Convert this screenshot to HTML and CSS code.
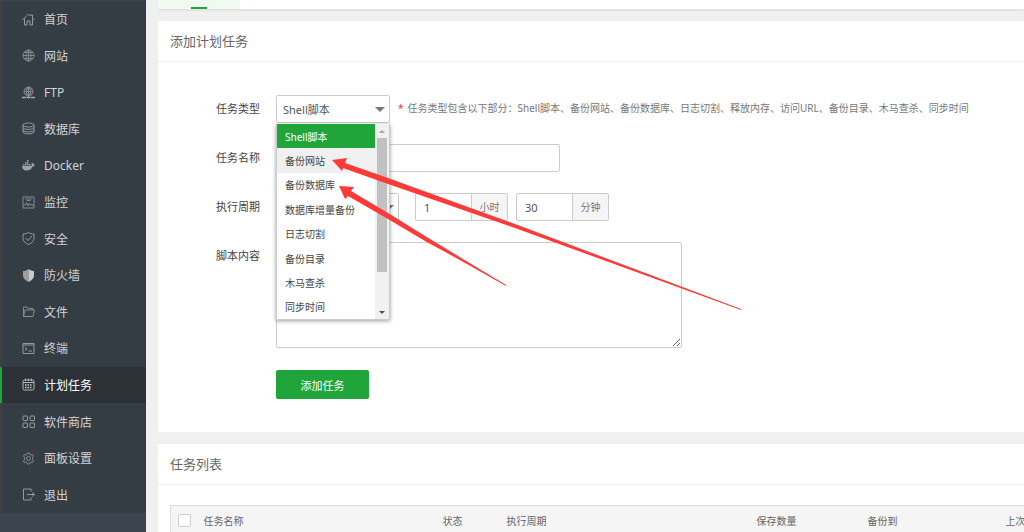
FILE: index.html
```html
<!DOCTYPE html>
<html lang="zh-CN">
<head>
    <meta charset="UTF-8">
    <meta name="viewport" content="width=device-width, initial-scale=1.0">
    <title>计划任务</title>
    <link rel="stylesheet" href="styles.css">
</head>
<body>
    <aside class="sidebar">
        <nav>
            <ul class="menu">
                <li><a href="#"><svg class="icon" viewBox="0 0 26 26"><path class="mid" d="M1 14L13 2l4 4V4h4v6l4 4M5 11v13h5v-8h6v8h5V11"/></svg>首页</a></li>
                <li><a href="#"><svg class="icon" viewBox="0 0 26 26"><circle cx="13" cy="13" r="11"/><ellipse cx="13" cy="13" rx="5" ry="11"/><path d="M13 2v22M2 13h22M4 7h18M4 19h18"/></svg>网站</a></li>
                <li><a href="#"><svg class="icon" viewBox="0 0 26 26"><circle cx="13" cy="11" r="9"/><ellipse cx="13" cy="11" rx="4" ry="9"/><path d="M13 2v22M4 11h18M6 6h14M6 16h14"/><path class="thick" d="M0 23h9M10 23h6M17 23h9"/></svg>FTP</a></li>
                <li><a href="#"><svg class="icon" viewBox="0 0 26 26"><g class="mid"><ellipse cx="13" cy="6" rx="11" ry="4"/><path d="M2 6v14c0 5 22 5 22 0V6M2 11c0 5 22 5 22 0M2 16c0 5 22 5 22 0"/></g></svg>数据库</a></li>
                <li><a href="#"><svg class="icon solid" viewBox="0 0 26 26"><path d="M0 14h18c2 0 2-3 1-5l1-2c2 1 3 2 3 4 1 0 2 0 3 1-1 2-3 3-5 3-2 5-6 8-12 8-6 0-9-4-9-9zM2 10h3v3H2zM6 10h3v3H6zM10 10h3v3h-3zM14 10h3v3h-3zM6 6h3v3H6zM10 6h3v3h-3zM10 2h3v3h-3z"/></svg>Docker</a></li>
                <li><a href="#"><svg class="icon" viewBox="0 0 26 26"><path d="M2 2h22v22H2zM7 6h12M9 9h8M2 18h5l2-5 3 7 3-6 2 4h7"/></svg>监控</a></li>
                <li><a href="#"><svg class="icon" viewBox="0 0 26 26"><path class="mid" d="M13 1c3 2 6 3 11 3v9c0 6-6 10-11 12C8 23 2 19 2 13V4c5 0 8-1 11-3zM7 12l5 5 8-9"/></svg>安全</a></li>
                <li><a href="#"><svg class="icon shield" viewBox="0 0 26 26"><path class="left" d="M13 0C9 3 6 4 2 4v9c0 6 5 10 11 13z"/><path class="right" d="M13 0c4 3 7 4 11 4v9c0 6-5 10-11 13z"/></svg>防火墙</a></li>
                <li><a href="#"><svg class="icon" viewBox="0 0 26 26"><path d="M3 23V4h7l3 3h9v3M3 23l3-13h19l-3 13z"/></svg>文件</a></li>
                <li><a href="#"><svg class="icon" viewBox="0 0 26 26"><path class="mid" d="M2 3h22v20H2zM2 6h22M6 11l4 3-4 3M13 18h7"/></svg>终端</a></li>
                <li class="active"><a href="#"><svg class="icon" viewBox="0 0 26 26"><rect class="mid" x="2" y="4" width="22" height="20" rx="3"/><path class="mid" d="M2 9h22M7 1v5M13 1v5M19 1v5"/><path class="dots" d="M6 14h14M6 19h14"/></svg>计划任务</a></li>
                <li><a href="#"><svg class="icon" viewBox="0 0 26 26"><g class="mid"><rect x="2" y="2" width="9" height="9" rx="1"/><rect x="16" y="2" width="9" height="9" rx="1"/><rect x="2" y="16" width="9" height="9" rx="1"/><rect x="16" y="16" width="9" height="9" rx="1"/></g></svg>软件商店</a></li>
                <li><a href="#"><svg class="icon" viewBox="0 0 26 26"><path d="M11 2h4l1 3 2 1 3-1 2 3-2 3v4l2 3-2 3-3-1-2 1-1 3h-4l-1-3-2-1-3 1-2-3 2-3v-4L3 8l2-3 3 1 2-1z"/><circle cx="13" cy="13" r="4"/></svg>面板设置</a></li>
                <li><a href="#"><svg class="icon" viewBox="0 0 26 26"><path class="mid" d="M18 7V2H3v22h15v-5M10 13h15M20 9l5 4-5 4"/></svg>退出</a></li>
            </ul>
        </nav>
    </aside>

    <main class="main">
        <div class="tabs"><span class="tab"></span></div>

        <section class="panel">
            <h2 class="panel-title">添加计划任务</h2>
            <form class="task-form">
                <div class="row">
                    <label for="type">任务类型</label>
                    <div class="dropdown">
                        <select id="type" class="control type-select">
                            <option>Shell脚本</option>
                        </select>
                        <div class="dropdown-menu">
                            <ul class="options" role="listbox" aria-label="任务类型">
                                <li role="option" aria-selected="true" class="selected">Shell脚本</li>
                                <li role="option" class="hover">备份网站</li>
                                <li role="option">备份数据库</li>
                                <li role="option">数据库增量备份</li>
                                <li role="option">日志切割</li>
                                <li role="option">备份目录</li>
                                <li role="option">木马查杀</li>
                                <li role="option">同步时间</li>
                            </ul>
                            <div class="scrollbar">
                                <span class="arrow-up"></span>
                                <span class="thumb"></span>
                                <span class="arrow-down"></span>
                            </div>
                        </div>
                    </div>
                    <p class="tip"><span class="star">*</span>任务类型包含以下部分：Shell脚本、备份网站、备份数据库、日志切割、释放内存、访问URL、备份目录、木马查杀、同步时间</p>
                </div>
                <div class="row">
                    <label for="name">任务名称</label>
                    <input id="name" class="control name-input" type="text">
                </div>
                <div class="row">
                    <label for="cycle">执行周期</label>
                    <div class="dropdown cycle">
                        <select id="cycle" class="control cycle-select">
                            <option></option>
                        </select>
                    </div>
                    <div class="input-group">
                        <input id="hour" class="control" type="text" value="1">
                        <label class="unit" for="hour">小时</label>
                    </div>
                    <div class="input-group">
                        <input id="minute" class="control" type="text" value="30">
                        <label class="unit" for="minute">分钟</label>
                    </div>
                </div>
                <div class="row">
                    <label for="script">脚本内容</label>
                    <textarea id="script" class="control"></textarea>
                </div>
                <button class="submit" type="button">添加任务</button>
            </form>
        </section>

        <section class="panel">
            <h2 class="panel-title">任务列表</h2>
            <div class="table-wrap">
                <table>
                    <thead>
                        <tr>
                            <th class="col-check"><input type="checkbox" aria-label="全选"></th>
                            <th class="col-name">任务名称</th>
                            <th class="col-status">状态</th>
                            <th class="col-cycle">执行周期</th>
                            <th class="col-count">保存数量</th>
                            <th class="col-target">备份到</th>
                            <th>上次执行时间</th>
                        </tr>
                    </thead>
                </table>
            </div>
        </section>
    </main>

    <svg class="pointers" viewBox="0 0 410 152" aria-hidden="true">
        <path d="M0 2L15 0L13 5L56 20L183 66L409 151L409 152L183 70L56 26L11 10L10 13Z"/>
        <path d="M7 28L22 29L19 33L56 55L93 78L126 98L174 127L174 128L126 101L93 83L56 61L16 38L13 41Z"/>
    </svg>
</body>
</html>
```
FILE: styles.css
```css
* {
    margin: 0;
    padding: 0;
    box-sizing: border-box;
}

body {
    display: flex;
    position: relative;
    height: 100vh;
    overflow: hidden;
    background: #f0f0f0;
    color: #555;
    font-family: "Noto Sans", "Noto Sans CJK SC", sans-serif;
    font-size: 11px;
}

input, select, textarea, button {
    font-family: inherit;
    font-size: 11px;
    color: #555;
}

/* sidebar */
.sidebar {
    flex: none;
    width: 146px;
    padding-top: 1px;
    background: #3c444d;
}

.menu {
    display: grid;
    grid-auto-rows: 1fr;
    height: 512px;
    list-style: none;
    background: #353d44;
}

.menu li {
    border-left: 2px solid #403f3f;
}

.menu a {
    display: flex;
    align-items: center;
    gap: 9px;
    height: 100%;
    padding-left: 20px;
    color: #d2d4d6;
    font-size: 12px;
    text-decoration: none;
}

.menu .active {
    background: #2c3138;
    border-left-color: #20a53a;
}

.menu .active a {
    color: #fff;
}

.icon {
    width: 13px;
    height: 13px;
    fill: none;
    stroke: #858a8f;
    stroke-width: 2;
}

.icon .mid {
    stroke: #969a9e;
}

.icon .thick {
    stroke: #a5a8ab;
    stroke-width: 3;
}

.icon.solid {
    fill: #a0a3a6;
    stroke: none;
}

.shield {
    stroke: none;
}

.shield .left {
    fill: #9b9fa1;
}

.shield .right {
    fill: #c9cbcc;
}

.active .mid {
    stroke: #b5b7ba;
}

.active .dots {
    stroke: #c4c6c8;
    stroke-width: 3;
    stroke-dasharray: 3 2;
}

/* content */
.main {
    flex: 1;
    min-width: 0;
    padding-left: 12px;
    overflow: hidden;
}

.tabs {
    height: 9px;
    margin-bottom: 12px;
    background: #fff;
    border-radius: 0 0 0 3px;
    box-shadow: 0 2px 2px #e2e2e2;
}

.tab {
    display: flex;
    align-items: flex-end;
    justify-content: center;
    width: 82px;
    height: 9px;
    background: #f0f9f2;
}

.tab::after {
    content: "";
    width: 16px;
    height: 2px;
    background: #20a53a;
}

.panel {
    margin-bottom: 12px;
    background: #fff;
    border-radius: 3px 0 0 3px;
}

.panel-title {
    padding: 0 12px;
    border-bottom: 1px solid #eee;
    color: #666;
    font-size: 13px;
    font-weight: normal;
    line-height: 40px;
}

.task-form {
    display: flex;
    flex-direction: column;
    gap: 21px;
    padding: 33px 0;
}

.row {
    display: flex;
}

.row > label {
    width: 102px;
    margin-right: 16px;
    color: #444;
    line-height: 28px;
    text-align: right;
}

.control {
    height: 28px;
    padding: 0 8px;
    background: #fff;
    border: 1px solid #ccc;
    border-radius: 2px;
    outline: none;
}

select.control {
    display: block;
    padding: 0 6px;
    appearance: none;
}

.dropdown {
    position: relative;
}

.dropdown::after {
    content: "";
    position: absolute;
    top: 12px;
    right: 5px;
    border: 5px solid transparent;
    border-top-color: #777;
    border-bottom: 0;
    pointer-events: none;
}

.type-select {
    width: 114px;
}

.dropdown-menu {
    position: absolute;
    z-index: 2;
    top: 29px;
    left: 0;
    display: flex;
    width: 114px;
    height: 196px;
    background: #fff;
    border: 1px solid #ccc;
    border-top: 0;
    box-shadow: 0 1px 4px rgba(0, 0, 0, 0.4);
}

.options {
    display: grid;
    grid-auto-rows: 1fr;
    flex: 1;
    list-style: none;
    font-size: 10px;
    color: #444;
}

.options li {
    display: flex;
    align-items: center;
    padding-left: 8px;
    white-space: nowrap;
}

.options .selected {
    background: #20a53a;
    color: #fff;
}

.options .hover {
    background: #f0f0f0;
}

.scrollbar {
    display: flex;
    flex-direction: column;
    align-items: center;
    width: 14px;
    padding: 6px 0 5px;
    background: #f1f1f1;
}

.arrow-up,
.arrow-down {
    border: 3px solid transparent;
}

.arrow-up {
    border-top: 0;
    border-bottom-color: #a3a3a3;
}

.arrow-down {
    margin-top: auto;
    border-bottom: 0;
    border-top-color: #505050;
}

.thumb {
    width: 10px;
    height: 134px;
    margin-top: 5px;
    background: #c1c1c1;
}

.tip {
    margin-left: 8px;
    color: #777;
    font-size: 10px;
    line-height: 26px;
    white-space: nowrap;
}

.star {
    margin-right: 4px;
    color: #f33;
}

.name-input {
    width: 284px;
}

.cycle {
    margin-right: 16px;
}

.cycle-select {
    width: 123px;
}

.input-group {
    display: flex;
    margin-right: 8px;
}

.input-group .control {
    width: 57px;
    border-radius: 2px 0 0 2px;
}

.unit {
    width: 36px;
    background: #f5f5f5;
    border: 1px solid #ccc;
    border-left: 0;
    border-radius: 0 2px 2px 0;
    color: #777;
    font-size: 10px;
    line-height: 26px;
    text-align: center;
}

textarea.control {
    width: 406px;
    height: 106px;
}

.submit {
    align-self: flex-start;
    width: 93px;
    height: 29px;
    margin: 1px 0 0 118px;
    background: #20a53a;
    border: 0;
    border-radius: 2px;
    color: #fff;
}

/* task list */
.table-wrap {
    padding: 20px 0 20px 12px;
}

table {
    width: 1000px;
    border: 1px solid #ddd;
    border-collapse: collapse;
    table-layout: fixed;
}

th {
    height: 29px;
    background: #f5f5f5;
    color: #666;
    font-size: 10px;
    font-weight: normal;
    text-align: left;
}

.col-check {
    width: 33px;
    padding-left: 7px;
}

.col-name {
    width: 239px;
}

.col-status {
    width: 64px;
}

.col-cycle {
    width: 250px;
}

.col-count {
    width: 111px;
}

.col-target {
    width: 138px;
}

th input {
    display: block;
    width: 13px;
    height: 13px;
    appearance: none;
    background: #fff;
    border: 1px solid #ccc;
    border-radius: 2px;
}

/* red pointers over the form */
.pointers {
    position: absolute;
    z-index: 3;
    top: 158px;
    left: 332px;
    width: 410px;
    height: 152px;
    fill: #fc3a38;
    pointer-events: none;
}
```
